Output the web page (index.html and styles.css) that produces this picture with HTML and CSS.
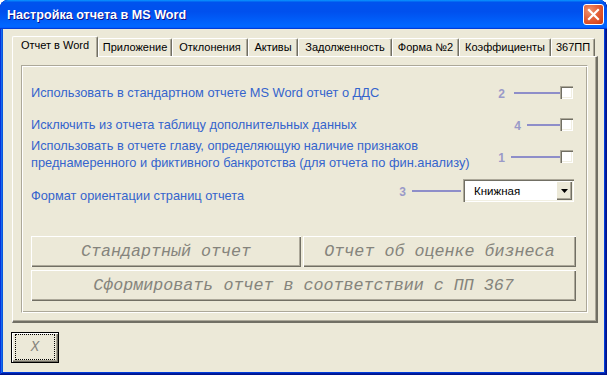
FILE: index.html
```html
<!DOCTYPE html>
<html>
<head>
<meta charset="utf-8">
<link rel="stylesheet" href="styles.css">
</head>
<body>
<div class="window">
  <div class="titlebar">
    <span class="title">Настройка отчета в MS Word</span>
    <div class="close">
      <svg width="13" height="13" viewBox="0 0 13 13"><path d="M2 2 L11 11 M11 2 L2 11" stroke="#fff" stroke-width="2.2" stroke-linecap="square"/></svg>
    </div>
  </div>
  <div class="client">
    <div class="tabs">
      <div class="tab active t1">Отчет в Word</div>
      <div class="tab t2">Приложение</div>
      <div class="tab t3">Отклонения</div>
      <div class="tab t4">Активы</div>
      <div class="tab t5">Задолженность</div>
      <div class="tab t6">Форма №2</div>
      <div class="tab t7">Коэффициенты</div>
      <div class="tab t8">367ПП</div>
    </div>
    <div class="page">
      <div class="frame">
        <div class="row">
          <div class="label">Использовать в стандартном отчете MS Word отчет о ДДС</div>
          <div class="marker"><span class="num">2</span><span class="line l1"></span></div>
          <span class="check"></span>
        </div>
        <div class="row">
          <div class="label">Исключить из отчета таблицу дополнительных данных</div>
          <div class="marker"><span class="num">4</span><span class="line l2"></span></div>
          <span class="check"></span>
        </div>
        <div class="row">
          <div class="label two">Использовать в отчете главу, определяющую наличие признаков<br>преднамеренного и фиктивного банкротства (для отчета по фин.анализу)</div>
          <div class="marker"><span class="num">1</span><span class="line l3"></span></div>
          <span class="check"></span>
        </div>
        <div class="row row4">
          <div class="label low">Формат ориентации страниц отчета</div>
          <div class="marker"><span class="num">3</span><span class="line l4"></span></div>
          <div class="combo">
            <span class="combo-text">Книжная</span>
            <span class="combo-btn"><svg width="7" height="4" viewBox="0 0 7 4"><path d="M0 0 H7 L3.5 4 Z" fill="#000"/></svg></span>
          </div>
        </div>
        <div class="buttons">
          <div class="btn">Стандартный отчет</div>
          <div class="btn">Отчет об оценке бизнеса</div>
          <div class="btn wide">Сформировать отчет в соответствии с ПП 367</div>
        </div>
      </div>
    </div>
    <div class="footer">
      <div class="xbtn"><div class="focus">X</div></div>
    </div>
  </div>
</div>
</body>
</html>
```
FILE: styles.css
```css
* { box-sizing: border-box; }
html, body { margin: 0; padding: 0; }
body {
  width: 607px;
  height: 375px;
  overflow: hidden;
  background: #ffffff;
  font-family: "Liberation Sans", Arial, sans-serif;
}
.window {
  width: 607px;
  height: 375px;
  display: flex;
  flex-direction: column;
  background: #0054e3;
  border-radius: 8px 8px 0 0;
  box-shadow: inset -1px -1px #00138c, inset 1px 1px #0831d9, inset -2px -2px #001ea0, inset 2px 2px #166aee, inset -3px -3px #003bda, inset 3px 3px #0855dd;
  overflow: hidden;
}
.titlebar {
  flex: none;
  height: 29px;
  display: flex;
  align-items: center;
  padding: 0 3px 0 7px;
  border-radius: 8px 8px 0 0;
  background: linear-gradient(180deg, #0997ff, #0053ee 8%, #0050ee 40%, #0066ff 88%, #0066ff 93%, #005bff 95%, #003dd7 96%, #003dd7);
}
.title {
  flex: 1;
  color: #ffffff;
  font-weight: bold;
  font-size: 12.6px;
  text-shadow: 1px 1px #0f1089;
  white-space: nowrap;
}
.close {
  width: 21px;
  height: 21px;
  display: flex;
  align-items: center;
  justify-content: center;
  border: 1px solid #ffffff;
  border-radius: 3px;
  background: radial-gradient(circle at 30% 30%, #f0946e 0%, #e2603a 45%, #d94a22 75%, #c13b12 100%);
}
.client {
  flex: 1;
  margin: 0 3px 3px;
  background: #ece9d8;
  padding: 7px 0 0 9px;
}
.tabs {
  display: flex;
  align-items: flex-end;
  height: 21px;
  margin-bottom: -1px;
  position: relative;
  z-index: 1;
}
.tab {
  height: 18px;
  margin-bottom: 1px;
  padding-top: 2px;
  font-size: 11px;
  line-height: 13px;
  color: #000;
  text-align: center;
  white-space: nowrap;
  background: #ece9d8;
  border-top: 1px solid #ffffff;
  border-left: 1px solid #ffffff;
  border-right: 1px solid #716f64;
  box-shadow: inset -1px 0 #aca899;
  border-radius: 2px 2px 0 0;
}
.tab.active {
  height: 21px;
  margin-bottom: 0;
}
.t1 { width: 86px; }
.t2 { width: 74px; }
.t3 { width: 76px; }
.t4 { width: 50px; }
.t5 { width: 94px; }
.t6 { width: 67px; }
.t7 { width: 92px; }
.t8 { width: 44px; }
.page {
  width: 586px;
  height: 267px;
  border-left: 1px solid #ffffff;
  border-top: 1px solid #ffffff;
  border-right: 2px solid #716f64;
  border-bottom: 2px solid #716f64;
  box-shadow: inset -1px -1px #aca899;
  padding: 8px;
}
.frame {
  width: 567px;
  height: 248px;
  border-top: 1px solid #aca899;
  border-left: 1px solid #aca899;
  border-right: 1px solid #ffffff;
  border-bottom: 1px solid #ffffff;
  box-shadow: inset 1px 1px #ffffff, inset -1px -1px #aca899;
  padding: 14px 13px 11px 9px;
  display: flex;
  flex-direction: column;
  gap: 7px;
}
.row {
  height: 25px;
  display: flex;
  align-items: center;
}
.row4 { height: 29px; }
.label {
  flex: 1;
  color: #3464cd;
  font-size: 12.8px;
  line-height: 16px;
  white-space: nowrap;
}
.label.two { line-height: 16.5px; margin-bottom: 4px; }
.label.low { align-self: flex-end; margin-bottom: 1px; }
.marker {
  display: flex;
  align-items: center;
}
.num {
  color: #9a9ac8;
  font-weight: bold;
  font-size: 12px;
  line-height: 14px;
  margin-top: 2px;
}
.line {
  height: 2px;
  background: #8e8ec9;
  margin-left: 6px;
}
.l1 { width: 46px; margin-left: 9px; }
.l2 { width: 33px; }
.l3 { width: 49px; }
.l4 { width: 49px; margin-right: 2px; }
.check {
  width: 13px;
  height: 13px;
  margin-right: 1px;
  background: #ffffff;
  box-shadow: inset 1px 1px #aca899, inset 2px 2px #716f64, inset -1px -1px #ffffff, inset -2px -2px #f1efe2;
}
.combo {
  width: 111px;
  height: 23px;
  background: #ffffff;
  box-shadow: inset 1px 1px #aca899, inset 2px 2px #716f64, inset -1px -1px #ffffff, inset -2px -2px #f1efe2;
  display: flex;
  align-items: center;
  padding: 2px;
}
.combo-text {
  flex: 1;
  padding-left: 9px;
  font-size: 11.5px;
  color: #000;
}
.combo-btn {
  width: 16px;
  height: 19px;
  background: #ece9d8;
  display: flex;
  align-items: center;
  justify-content: center;
  box-shadow: inset 1px 1px #ffffff, inset -1px -1px #716f64, inset -2px -2px #aca899;
}
.buttons {
  margin-top: 24px;
  margin-right: -2px;
  display: grid;
  grid-template-columns: 270px 1fr;
  column-gap: 2px;
  row-gap: 3px;
}
.btn {
  height: 31px;
  display: flex;
  align-items: center;
  justify-content: center;
  font-family: "Liberation Mono", "Courier New", monospace;
  font-style: italic;
  font-size: 16.7px;
  color: #85847c;
  white-space: nowrap;
  background: #ece9d8;
  box-shadow: inset 1px 1px #ffffff, inset -1px -1px #716f64, inset -2px -2px #aca899;
}
.btn.wide { grid-column: 1 / 3; }
.footer { padding-top: 9px; }
.xbtn {
  width: 48px;
  height: 31px;
  margin-left: -1px;
  border: 1px solid #000;
  background: #ece9d8;
  box-shadow: inset 1px 1px #ffffff, inset -1px -1px #716f64, inset -2px -2px #aca899;
  padding: 1px 3px 2px 3px;
}
.focus {
  height: 100%;
  border: 1px dotted #000;
  display: flex;
  align-items: center;
  justify-content: center;
  font-family: "Liberation Mono", "Courier New", monospace;
  font-style: italic;
  font-size: 14px;
  color: #85847c;
}
```
